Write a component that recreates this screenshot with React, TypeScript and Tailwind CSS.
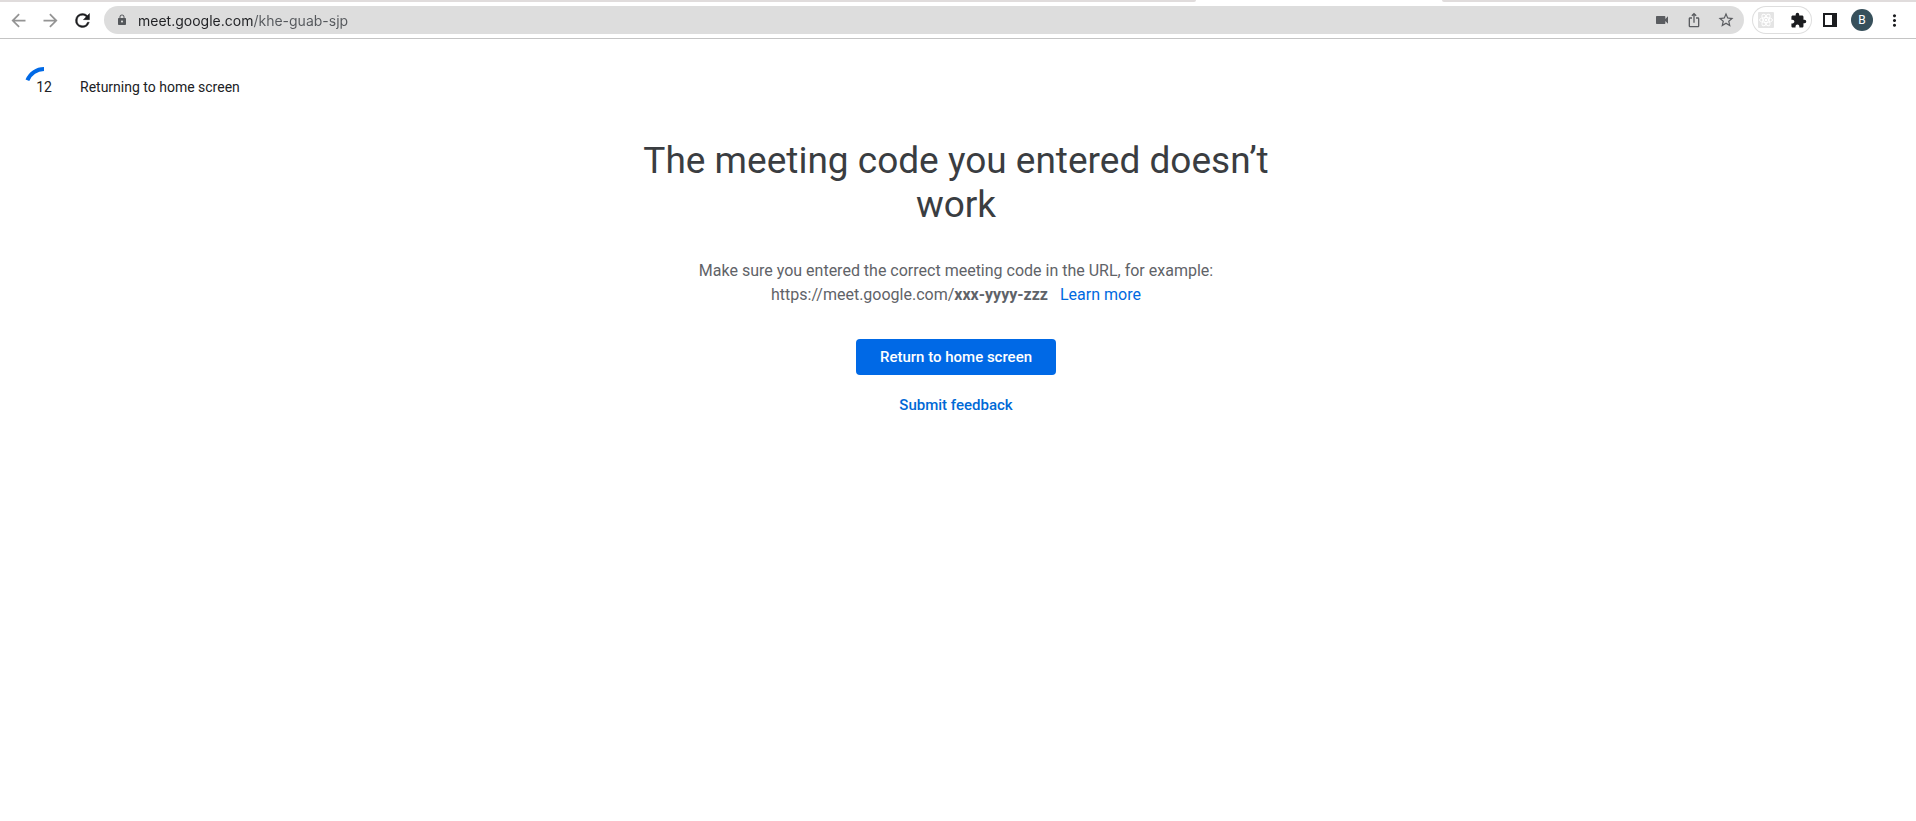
import type { ReactNode } from "react";
import {
  MdArrowBack,
  MdArrowForward,
  MdExtension,
  MdIosShare,
  MdLock,
  MdMoreVert,
  MdStarBorder,
  MdVideocam,
} from "react-icons/md";

function IconButton({ label, children }: { label: string; children: ReactNode }) {
  return (
    <button
      type="button"
      aria-label={label}
      className="flex size-7 shrink-0 items-center justify-center rounded-full"
    >
      {children}
    </button>
  );
}

function ReloadIcon() {
  return (
    <svg viewBox="0 0 24 24" className="size-[21px] text-[#1b1c1f]" fill="currentColor">
      <path
        d="M17.65 6.35A7.96 7.96 0 0 0 12 4a8 8 0 1 0 7.73 10h-2.08A6 6 0 1 1 12 6c1.66 0 3.14.69 4.22 1.78L13 11h7V4z"
        stroke="currentColor"
        strokeWidth="0.5"
      />
    </svg>
  );
}

function AtomIcon() {
  return (
    <svg viewBox="0 0 16 16" className="size-4" fill="none">
      <rect width="16" height="16" rx="1" fill="#e4e4e4" />
      <g stroke="#ffffff" strokeWidth="1">
        <ellipse cx="8" cy="8" rx="6.5" ry="2.5" />
        <ellipse cx="8" cy="8" rx="6.5" ry="2.5" transform="rotate(60 8 8)" />
        <ellipse cx="8" cy="8" rx="6.5" ry="2.5" transform="rotate(120 8 8)" />
      </g>
      <circle cx="8" cy="8" r="1.3" fill="#ffffff" />
    </svg>
  );
}

function TabStrip() {
  return (
    <div className="flex h-0.5" aria-hidden="true">
      <div className="w-[1196px] rounded-br-[4px] bg-[#e0dcdc]" />
      <div className="w-[246px]" />
      <div className="flex-1 rounded-bl-[4px] bg-[#e0dcdc]" />
    </div>
  );
}

function AddressBar() {
  return (
    <div className="ml-1 flex h-7 flex-1 items-center rounded-full bg-[#dddddd] pr-1 pl-3">
      <MdLock className="size-3 shrink-0 text-[#54575b]" />
      <input
        type="text"
        aria-label="Address"
        defaultValue="meet.google.com/khe-guab-sjp"
        className="ml-2.5 h-7 min-w-0 flex-1 bg-[linear-gradient(to_right,#202124_115px,#55585c_115px)] bg-clip-text font-['Inter',sans-serif] text-sm text-transparent outline-none"
      />
      <div className="flex gap-1 text-[#5a5c60]">
        <IconButton label="Camera access">
          <MdVideocam className="size-4" />
        </IconButton>
        <IconButton label="Share this page">
          <MdIosShare className="size-4" />
        </IconButton>
        <IconButton label="Bookmark this tab">
          <MdStarBorder className="size-[18px]" />
        </IconButton>
      </div>
    </div>
  );
}

function Toolbar() {
  return (
    <div className="flex items-center gap-1 border-b border-[#c4c4c4] py-1 pr-2 pl-1">
      <div className="flex gap-1 text-[#949494]">
        <IconButton label="Back">
          <MdArrowBack className="size-[21px]" />
        </IconButton>
        <IconButton label="Forward">
          <MdArrowForward className="size-[21px]" />
        </IconButton>
        <IconButton label="Reload">
          <ReloadIcon />
        </IconButton>
      </div>
      <AddressBar />
      <div className="ml-1 flex gap-1 rounded-full inset-ring inset-ring-[#dedede]">
        <IconButton label="React Developer Tools">
          <AtomIcon />
        </IconButton>
        <IconButton label="Extensions">
          <MdExtension className="size-[17px] text-[#1b1c1f]" />
        </IconButton>
      </div>
      <IconButton label="Side panel">
        <svg viewBox="0 0 14 14" className="size-3.5 text-[#1b1c1f]" fill="none">
          <rect x="1" y="1" width="12" height="12" stroke="currentColor" strokeWidth="2" />
          <rect x="9" y="1" width="5" height="12" fill="currentColor" />
        </svg>
      </IconButton>
      <IconButton label="Profile">
        <span className="flex size-[22px] items-center justify-center rounded-full bg-[#37505b] font-['Roboto',sans-serif] text-xs text-white">
          B
        </span>
      </IconButton>
      <IconButton label="Browser menu">
        <MdMoreVert className="size-[19px] text-[#1b1c1f]" />
      </IconButton>
    </div>
  );
}

function Countdown() {
  return (
    <div role="timer" className="flex items-center gap-4 px-6 pt-7 text-sm text-[#202124]">
      <div className="grid size-10 place-items-center">
        <svg viewBox="0 0 40 40" className="col-start-1 row-start-1 size-10" fill="none">
          <path d="M3.4 13.2A18 18 0 0 1 20 2" stroke="#0069e6" strokeWidth="4" />
        </svg>
        <span className="col-start-1 row-start-1">12</span>
      </div>
      <span>Returning to home screen</span>
    </div>
  );
}

export default function App() {
  return (
    <div className="min-h-screen bg-white font-['Roboto',sans-serif]">
      <TabStrip />
      <Toolbar />
      <Countdown />
      <main className="flex flex-col items-center pt-8 pr-1 text-center">
        <h1 className="max-w-2xl text-[37px] leading-[44px] text-[#3a3d41]">
          The meeting code you entered doesn’t work
        </h1>
        <p className="mt-8 text-base leading-6 text-[#5f6368]">
          Make sure you entered the correct meeting code in the URL, for example:
          <br />
          https://meet.google.com/<strong className="font-bold">xxx-yyyy-zzz</strong>
          <a href="#learn-more" className="ml-3 text-[#0069e0]">
            Learn more
          </a>
        </p>
        <button
          type="button"
          className="mt-8 h-9 rounded bg-[#0069e6] px-6 text-[15px] font-medium text-white"
        >
          Return to home screen
        </button>
        <button type="button" className="mt-3 h-9 px-2 text-[15px] font-medium text-[#0069d6]">
          Submit feedback
        </button>
      </main>
    </div>
  );
}
